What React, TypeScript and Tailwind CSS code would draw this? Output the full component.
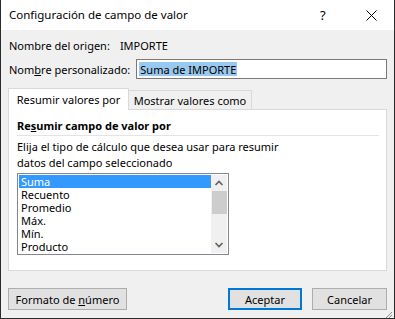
import React from 'react';

const items = ['Suma', 'Recuento', 'Promedio', 'Máx.', 'Mín.', 'Producto'];

const Btn = ({ children, primary, className = '' }: { children: React.ReactNode; primary?: boolean; className?: string }) => (
  <button
    className={`h-[22px] bg-[#e1e1e1] text-[11px] text-black flex items-center justify-center whitespace-nowrap ${
      primary ? 'border-2 border-[#0078d7]' : 'border border-[#adadad]'
    } ${className}`}
  >
    <span>{children}</span>
  </button>
);

export default function App() {
  return (
    <div
      className="w-[395px] h-[319px] flex flex-col border-x border-b border-[#2b2b2b] bg-[#f0f0f0] text-[11px] text-black leading-none overflow-hidden whitespace-nowrap"
      style={{ fontFamily: '"Segoe UI", "Noto Sans", sans-serif' }}
    >
      {/* title bar */}
      <div className="h-[30px] shrink-0 bg-white flex items-center pl-[8px]">
        <span className="text-[11.5px] flex-1">Configuración de campo de valor</span>
        <span className="w-[10px] mr-[36px] text-[13px]">?</span>
        <svg width="11" height="11" viewBox="0 0 11 11" className="mr-[17px]">
          <path d="M0.5 0.5 L10.5 10.5 M10.5 0.5 L0.5 10.5" stroke="#000" strokeWidth="1" />
        </svg>
      </div>

      {/* body */}
      <div className="flex flex-col px-[7px] pt-[8px]">
        <div className="h-[14px] flex items-center pl-[1px]">
          <span>Nombre del origen:</span>
          <span className="ml-[10px]">IMPORTE</span>
        </div>
        <div className="h-[20px] mt-[7px] flex items-center pl-[1px]">
          <span className="w-[128px]">
            Nom<u>b</u>re personalizado:
          </span>
          <div className="w-[252px] h-[20px] bg-white border border-[#7a7a7a] flex items-center pl-[2px]">
            <span className="bg-[#99c9ef] px-[1px] h-[14px] flex items-center">Suma de IMPORTE</span>
          </div>
        </div>

        {/* tabs */}
        <div className="flex items-end mt-[9px] h-[21px]">
          <div className="w-[121px] h-[22px] bg-white border border-b-0 border-[#d9d9d9] flex items-center justify-center relative z-10 -mb-px">
            Resumir valores por
          </div>
          <div className="w-[123px] h-[19px] bg-[#f0f0f0] border border-l-0 border-b-0 border-[#d9d9d9] flex items-center justify-center">
            Mostrar valores como
          </div>
        </div>

        {/* panel */}
        <div className="w-[379px] h-[162px] bg-white border border-[#d9d9d9] px-[8px] pt-[10px]">
          <div className="font-bold pb-[4px] border-b border-[#e3e3e3] w-[362px]">
            Re<u>s</u>umir campo de valor por
          </div>
          <div className="mt-[3px] leading-[16px]">
            Elija el tipo de cálculo que desea usar para resumir
            <br />
            datos del campo seleccionado
          </div>
          <div className="mt-[2px] w-[212px] h-[82px] border border-[#828790] flex p-[1px]">
            <div className="flex-1 flex flex-col">
              {items.map((it, i) => (
                <div
                  key={it}
                  className={`h-[13px] leading-[13px] pl-[2px] ${i === 0 ? 'bg-[#3399ff] text-white' : ''}`}
                >
                  {it}
                </div>
              ))}
            </div>
            <div className="w-[16px] bg-[#f0f0f0] flex flex-col items-center">
              <svg width="16" height="16" viewBox="0 0 16 16">
                <path d="M4.5 10 L8 6.5 L11.5 10" stroke="#606060" strokeWidth="1.6" fill="none" />
              </svg>
              <div className="w-[15px] h-[23px] bg-[#cdcdcd]" />
              <div className="flex-1" />
              <svg width="16" height="16" viewBox="0 0 16 16">
                <path d="M4.5 6 L8 9.5 L11.5 6" stroke="#606060" strokeWidth="1.6" fill="none" />
              </svg>
            </div>
          </div>
        </div>

        {/* buttons */}
        <div className="flex items-center mt-[17px]">
          <Btn className="w-[119px]">
            Formato de <u>n</u>úmero
          </Btn>
          <div className="flex-1" />
          <Btn primary className="w-[74px]">Aceptar</Btn>
          <Btn className="w-[75px] ml-[10px]">Cancelar</Btn>
        </div>
      </div>
      <div className="flex-1 flex justify-end items-end">
        <svg width="10" height="10" viewBox="0 0 10 10" className="mr-[1px] mb-[1px]">
          <path d="M9 2 L2 9 M9 5 L5 9 M9 8 L8 9" stroke="#8a8a8a" strokeWidth="1" />
        </svg>
      </div>
    </div>
  );
}
